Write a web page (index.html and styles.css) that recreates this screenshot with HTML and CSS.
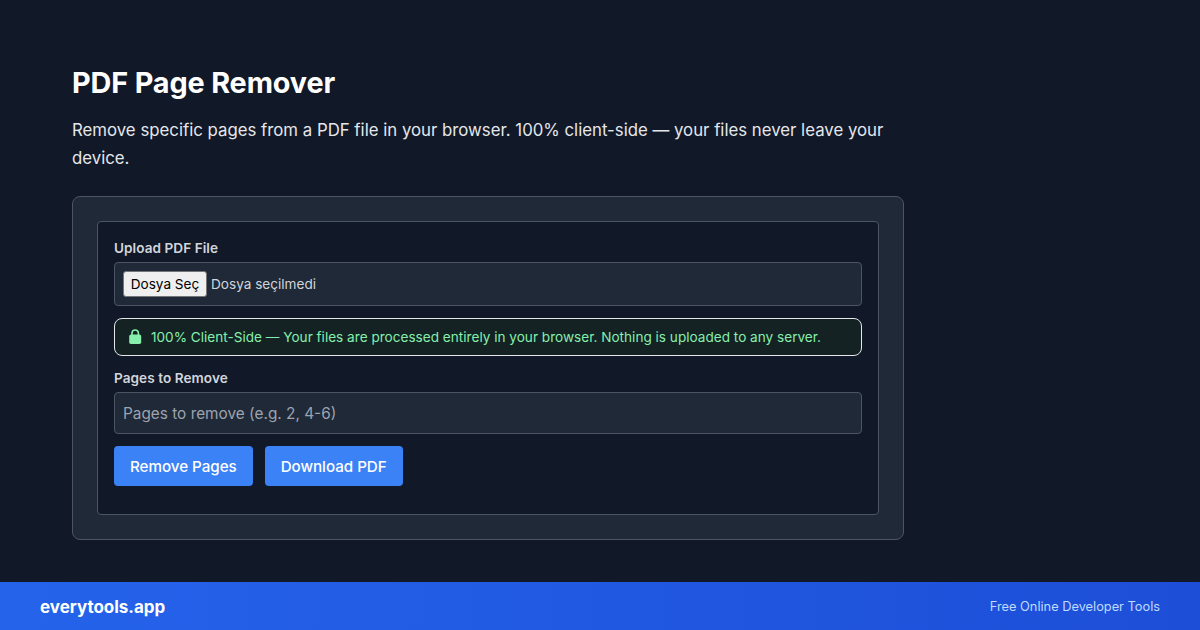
FILE: index.html
```html
<!DOCTYPE html>
<html lang="en">
<head>
<meta charset="utf-8">
<title>PDF Page Remover</title>
<link rel="stylesheet" href="styles.css">
</head>
<body>
<main class="page">
  <h1 class="title">PDF Page Remover</h1>
  <p class="lead">Remove specific pages from a PDF file in your browser. 100% client-side — your files never leave your device.</p>
  <section class="card">
    <div class="panel">
      <div class="label">Upload PDF File</div>
      <div class="file-field">
        <button class="file-btn" type="button">Dosya Seç</button>
        <span class="file-name">Dosya seçilmedi</span>
      </div>
      <div class="notice">
        <svg class="lock" width="14" height="16" viewBox="0 0 14 16" aria-hidden="true">
          <path d="M3 7V4.2a3.2 3.2 0 0 1 6.4 0V7" fill="none" stroke="#86efac" stroke-width="1.6"/>
          <rect x="0.2" y="5.6" width="12" height="9.4" rx="1.8" fill="#86efac"/>
        </svg>
        <span>100% Client-Side — Your files are processed entirely in your browser. Nothing is uploaded to any server.</span>
      </div>
      <div class="label label-pages">Pages to Remove</div>
      <input class="text-input" type="text" placeholder="Pages to remove (e.g. 2, 4-6)">
      <div class="actions">
        <button class="primary" type="button">Remove Pages</button>
        <button class="primary" type="button">Download PDF</button>
      </div>
    </div>
  </section>
</main>
<footer class="banner">
  <span class="brand">everytools.app</span>
  <span class="tagline">Free Online Developer Tools</span>
</footer>
</body>
</html>
```
FILE: styles.css
```css
* { box-sizing: border-box; }
html, body { margin: 0; height: 100%; }
body {
  width: 1200px;
  height: 630px;
  overflow: hidden;
  display: flex;
  flex-direction: column;
  background: #111827;
  color: #f3f4f6;
  font-family: Inter, "Liberation Sans", sans-serif;
}
.page {
  flex: 1;
  padding: 64px 72px 0;
}
.title {
  margin: 0;
  font-size: 28.8px;
  line-height: 38px;
  font-weight: 700;
  letter-spacing: -0.13px;
  color: #fff;
}
.lead {
  width: 832px;
  margin: 14px 0 24px;
  font-size: 16.8px;
  line-height: 28px;
  color: #e5e7eb;
}
.card {
  width: 832px;
  height: 344px;
  padding: 24px;
  background: #1f2937;
  border: 1px solid #4b5563;
  border-radius: 8px;
}
.panel {
  height: 294px;
  padding: 16px;
  background: #111827;
  border: 1px solid #4b5563;
  border-radius: 4px;
}
.label {
  font-size: 13.6px;
  line-height: 20px;
  font-weight: 600;
  letter-spacing: 0.05px;
  color: #d1d5db;
  margin-bottom: 4px;
}
.label-pages { margin-top: 12px; }
.file-field {
  display: flex;
  align-items: center;
  height: 44px;
  padding: 0 8px;
  background: #1f2937;
  border: 1px solid #4b5563;
  border-radius: 4px;
}
.file-btn {
  width: 84px;
  height: 26px;
  padding: 0;
  margin-right: 4px;
  font-family: inherit;
  font-size: 13.6px;
  color: #000;
  background: #efefef;
  border: 1px solid #767676;
  border-radius: 3px;
}
.file-name {
  font-size: 13.6px;
  color: #d1d5db;
}
.notice {
  display: flex;
  align-items: center;
  gap: 8px;
  height: 38px;
  margin-top: 12px;
  padding: 0 14px;
  font-size: 13.6px;
  color: #86efac;
  background: #142224;
  border: 1px solid #e5e7eb;
  border-radius: 8px;
}
.lock { flex: none; }
.text-input {
  display: block;
  width: 100%;
  height: 42px;
  padding: 0 8px;
  font-family: inherit;
  font-size: 15.36px;
  color: #f3f4f6;
  background: #1f2937;
  border: 1px solid #4b5563;
  border-radius: 4px;
}
.text-input::placeholder { color: #9ca3af; opacity: 1; }
.actions {
  display: flex;
  gap: 12px;
  margin-top: 12px;
}
.primary {
  height: 40px;
  padding: 0 16px;
  font-family: inherit;
  font-size: 15.2px;
  font-weight: 500;
  letter-spacing: -0.04px;
  color: #fff;
  background: #3b82f6;
  border: 0;
  border-radius: 4px;
}
.banner {
  flex: none;
  display: flex;
  align-items: center;
  justify-content: space-between;
  height: 48px;
  padding: 0 40px 0;
  background: linear-gradient(90deg, #2563eb, #1d4ed8);
}
.brand {
  padding-top: 2px;
  font-size: 17px;
  font-weight: 700;
  letter-spacing: -0.03px;
  color: #fff;
}
.tagline {
  font-size: 12.8px;
  font-weight: 400;
  color: #bfdbfe;
}
```
